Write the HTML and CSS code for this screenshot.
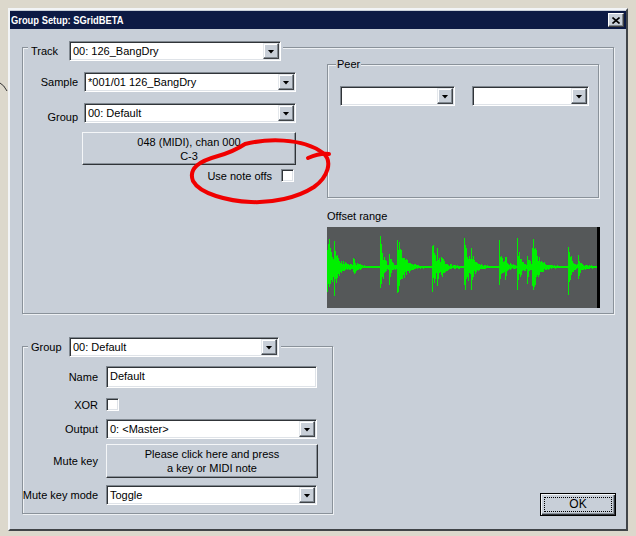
FILE: index.html
```html
<!DOCTYPE html>
<html lang="en">
<head>
  <meta charset="UTF-8">
  <title>Group Setup: SGridBETA</title>
  <link rel="stylesheet" href="styles.css">
</head>
<body>
  <div class="window">
    <div class="titlebar">
      <span class="title">Group Setup: SGridBETA</span>
      <button class="close">
        <svg width="8" height="7" viewBox="0 0 8 7"><path d="M0.5 0.5L7.5 6.5M7.5 0.5L0.5 6.5" stroke="#000" stroke-width="1.6"/></svg>
      </button>
    </div>
    <div class="client">
      <div class="gb track">
        <div class="gb-head">
          <span class="head-lbl">Track</span>
          <div class="combo w212"><span class="combo-text">00: 126_BangDry</span><span class="drop"></span></div>
        </div>
        <div class="track-body">
          <div class="left-col">
            <div class="row first">
              <span class="lbl">Sample</span>
              <div class="combo w212"><span class="combo-text">*001/01 126_BangDry</span><span class="drop"></span></div>
            </div>
            <div class="row low">
              <span class="lbl">Group</span>
              <div class="combo w212"><span class="combo-text">00: Default</span><span class="drop"></span></div>
            </div>
            <button class="btn note-btn">048 (MIDI), chan 000<br>C-3</button>
            <div class="check-row">
              <span>Use note offs</span>
              <span class="check"></span>
            </div>
          </div>
          <div class="right-col">
            <div class="gb peer">
              <div class="gb-head text-head">Peer</div>
              <div class="peer-row">
                <div class="combo w115"><span class="combo-text"></span><span class="drop"></span></div>
                <div class="combo w117"><span class="combo-text"></span><span class="drop"></span></div>
              </div>
            </div>
            <div class="offset-lbl">Offset range</div>
            <div class="wave"><svg id="wave" width="270" height="81" viewBox="0 0 270 81"></svg></div>
          </div>
        </div>
      </div>

      <div class="bottom">
        <div class="gb group">
          <div class="gb-head">
            <span class="head-lbl">Group</span>
            <div class="combo w210"><span class="combo-text">00: Default</span><span class="drop"></span></div>
          </div>
          <div class="frow name-row">
            <span class="flbl">Name</span>
            <div class="edit">Default</div>
          </div>
          <div class="frow xor-row">
            <span class="flbl">XOR</span>
            <span class="check"></span>
          </div>
          <div class="frow output-row">
            <span class="flbl">Output</span>
            <div class="combo w211"><span class="combo-text">0: &lt;Master&gt;</span><span class="drop"></span></div>
          </div>
          <div class="frow mute-row">
            <span class="flbl">Mute key</span>
            <button class="btn mute-btn">Please click here and press<br>a key or MIDI note</button>
          </div>
          <div class="frow mode-row">
            <span class="flbl">Mute key mode</span>
            <div class="combo w211"><span class="combo-text">Toggle</span><span class="drop"></span></div>
          </div>
        </div>
        <button class="ok"><span class="focus">OK</span></button>
      </div>
    </div>
  </div>

  <svg class="marks" width="636" height="536" viewBox="0 0 636 536">
    <path d="M0 83 Q4 85 7 91" fill="none" stroke="#333" stroke-width="1"/>
    <path d="M245 144 C265 139 302 137 323 153 C333 161 328 177 314 187 C297 198 272 203 251 202 C228 201 200 194 193 181 C188 168 200 161 218 156 C232 152 239 148 245 144" fill="none" stroke="#f00000" stroke-width="4" stroke-linecap="round" stroke-linejoin="round"/>
    <path d="M308 158 C315 155 321 153 329 154" fill="none" stroke="#f00000" stroke-width="4" stroke-linecap="round"/>
  </svg>

  <script>
    // waveform for the offset range box
    const wave = document.getElementById('wave');
    let seed = 11;
    function rnd() {
      seed = (seed * 16807) % 2147483647;
      return seed / 2147483647;
    }
    // [onset, amplitude, sharp decay, tail]
    const bursts = [
      [0, 36, 5, 7], [7, 16, 2, 4], [26, 7, 2, 2], [53, 30, 3, 3], [62, 15, 1.5, 2],
      [70, 32, 5, 5], [105, 29, 3, 3], [110, 12, 1.5, 2], [114, 10, 1.5, 2],
      [137, 32, 4, 4], [144, 14, 1.5, 2], [172, 24, 2.5, 3], [178, 9, 1.5, 2],
      [190, 25, 2.5, 3], [200, 14, 1.5, 2], [205, 32, 4, 5], [241, 28, 2.5, 3], [251, 12, 1.5, 2]
    ];
    const cy = 40;
    let d = '';
    for (let x = 0; x < 270; x++) {
      let a = 0.6;
      for (const [o, amp, k, tail] of bursts) {
        if (x >= o) a += amp * Math.exp(-(x - o) / k) + tail * Math.exp(-(x - o) / 12);
      }
      a = Math.min(a, 37);
      const up = Math.max(0.6, a * (0.45 + 0.55 * rnd()));
      const dn = Math.max(0.6, a * 0.95 * (0.45 + 0.55 * rnd()));
      d += 'M' + x + ' ' + (cy - up).toFixed(1) + 'h1V' + (cy + dn).toFixed(1) + 'h-1Z';
    }
    const path = document.createElementNS('http://www.w3.org/2000/svg', 'path');
    path.setAttribute('d', d);
    path.setAttribute('fill', '#00f000');
    wave.appendChild(path);
  </script>
</body>
</html>
```

FILE: styles.css
```css
body {
  margin: 0;
  width: 636px;
  height: 536px;
  overflow: hidden;
  position: relative;
  background: #dcd8cc;
  font-family: "Liberation Sans", Arial, sans-serif;
  font-size: 11px;
  color: #000;
}

.window {
  margin: 8px 0 0 8px;
  width: 620px;
  height: 523px;
  box-sizing: border-box;
  border: 2px solid;
  border-color: #f2f4f6 #404448 #404448 #f2f4f6;
  padding-top: 1px;
  background: #c8cfd8;
  display: flex;
  flex-direction: column;
}

.titlebar {
  height: 18px;
  background: #0c1a44;
  display: flex;
  align-items: center;
  justify-content: space-between;
  padding: 0 2px 0 1px;
}

.title {
  display: inline-block;
  color: #fff;
  font-weight: bold;
  font-size: 11px;
  white-space: nowrap;
  transform: scaleX(0.85);
  transform-origin: left center;
}

.close {
  width: 16px;
  height: 14px;
  box-sizing: border-box;
  padding: 0;
  background: #c8cfd8;
  border: 1px solid;
  border-color: #fff #404040 #404040 #fff;
  box-shadow: inset -1px -1px 0 #808890;
  display: flex;
  align-items: center;
  justify-content: center;
}

.client {
  flex: 1;
  padding: 18px 10px 0 12px;
  display: flex;
  flex-direction: column;
}

/* group boxes */
.gb {
  box-sizing: border-box;
  border: 1px solid #8a929a;
  box-shadow: 1px 1px 0 #eef1f4, inset 1px 1px 0 #eef1f4;
  display: flex;
  flex-direction: column;
}

.gb-head {
  align-self: flex-start;
  display: flex;
  align-items: center;
  background: #c8cfd8;
  margin: -7px 0 0 5px;
  padding: 0 2px 0 3px;
}

.head-lbl {
  width: 38px;
}

.text-head {
  margin: -7px 0 0 8px;
  padding: 0 1px;
  line-height: 13px;
}

.track {
  width: 592px;
  padding-bottom: 5px;
}

.track-body {
  display: flex;
  align-items: flex-start;
}

.left-col {
  width: 273px;
  display: flex;
  flex-direction: column;
}

.row {
  display: flex;
  align-items: center;
  margin-top: 11px;
}

.row.low {
  align-items: flex-end;
}

.row .lbl {
  width: 55px;
  margin-right: 6px;
  text-align: right;
  line-height: 13px;
}

.row.low .lbl {
  margin-bottom: -1px;
}

.note-btn {
  margin: 9px 0 0 59px;
  width: 214px;
  height: 33px;
}

.check-row {
  display: flex;
  justify-content: flex-end;
  align-items: center;
  gap: 9px;
  margin: 4px 2px 0 0;
}

.right-col {
  margin-left: 31px;
  display: flex;
  flex-direction: column;
}

.peer {
  margin-top: 3px;
  width: 272px;
  height: 134px;
}

.peer-row {
  display: flex;
  gap: 17px;
  margin: 15px 0 0 12px;
}

.offset-lbl {
  margin-top: 12px;
  line-height: 13px;
}

.wave {
  margin-top: 4px;
  width: 273px;
  height: 81px;
  box-sizing: border-box;
  background: #555859;
  border-right: 3px solid #000;
}

.wave svg {
  display: block;
  shape-rendering: crispEdges;
}

/* combo boxes, edits, checks */
.combo {
  display: flex;
  height: 20px;
  box-sizing: border-box;
  padding: 1px;
  background: #fff;
  border: 1px solid;
  border-color: #808890 #fff #fff #808890;
  box-shadow: inset 1px 1px 0 #303438, inset -1px -1px 0 #dfe3e8;
}

.w212 { width: 212px; }
.w211 { width: 211px; }
.w210 { width: 210px; }
.w115 { width: 115px; }
.w117 { width: 117px; }

.combo-text {
  flex: 1;
  padding-left: 2px;
  line-height: 16px;
  white-space: nowrap;
  overflow: hidden;
}

.drop {
  width: 16px;
  height: 16px;
  box-sizing: border-box;
  background: #c8cfd8;
  border: 1px solid;
  border-color: #e4e8ec #404448 #404448 #e4e8ec;
  box-shadow: inset -1px -1px 0 #808890, inset 1px 1px 0 #fff;
  display: flex;
  align-items: center;
  justify-content: center;
}

.drop::after {
  content: "";
  width: 7px;
  height: 4px;
  margin-top: 1px;
  background: #000;
  clip-path: polygon(0 0, 100% 0, 50% 100%);
}

.edit {
  width: 211px;
  height: 22px;
  box-sizing: border-box;
  padding: 0 3px;
  line-height: 18px;
  background: #fff;
  border: 1px solid;
  border-color: #808890 #fff #fff #808890;
  box-shadow: inset 1px 1px 0 #303438, inset -1px -1px 0 #dfe3e8;
}

.check {
  width: 13px;
  height: 13px;
  box-sizing: border-box;
  background: #fff;
  border: 1px solid;
  border-color: #808890 #fff #fff #808890;
  box-shadow: inset 1px 1px 0 #303438, inset -1px -1px 0 #dfe3e8;
}

.btn {
  padding: 0;
  font: inherit;
  line-height: 14px;
  text-align: center;
  color: #000;
  background: #c8cfd8;
  border: 1px solid;
  border-color: #f4f6f8 #303438 #303438 #f4f6f8;
  box-shadow: inset -1px -1px 0 #8a929a;
}

/* lower group */
.bottom {
  margin-top: 32px;
  display: flex;
  justify-content: space-between;
  align-items: flex-end;
}

.group {
  width: 311px;
  padding-bottom: 8px;
}

.group .gb-head {
  margin-top: -10px;
}

.frow {
  display: flex;
  align-items: center;
}

.flbl {
  width: 75px;
  margin-right: 8px;
  display: flex;
  justify-content: flex-end;
  white-space: nowrap;
}

.name-row { margin-top: 9px; }
.xor-row { margin-top: 10px; }
.output-row { margin-top: 8px; }
.mute-row { margin-top: 5px; }
.mode-row { margin-top: 7px; }

.mute-btn {
  width: 212px;
  height: 34px;
}

.ok {
  width: 76px;
  height: 23px;
  margin-bottom: -2px;
  padding: 3px;
  box-sizing: border-box;
  background: #c8cfd8;
  border: 1px solid #000;
  box-shadow: inset 1px 1px 0 #f4f6f8, inset -1px -1px 0 #303438, inset -2px -2px 0 #8a929a;
  font-family: "Liberation Sans", Arial, sans-serif;
  font-size: 12px;
  color: #000;
}

.focus {
  display: block;
  height: 100%;
  box-sizing: border-box;
  border: 1px dotted #000;
  line-height: 13px;
}

.marks {
  position: absolute;
  top: 0;
  left: 0;
  pointer-events: none;
}
```
